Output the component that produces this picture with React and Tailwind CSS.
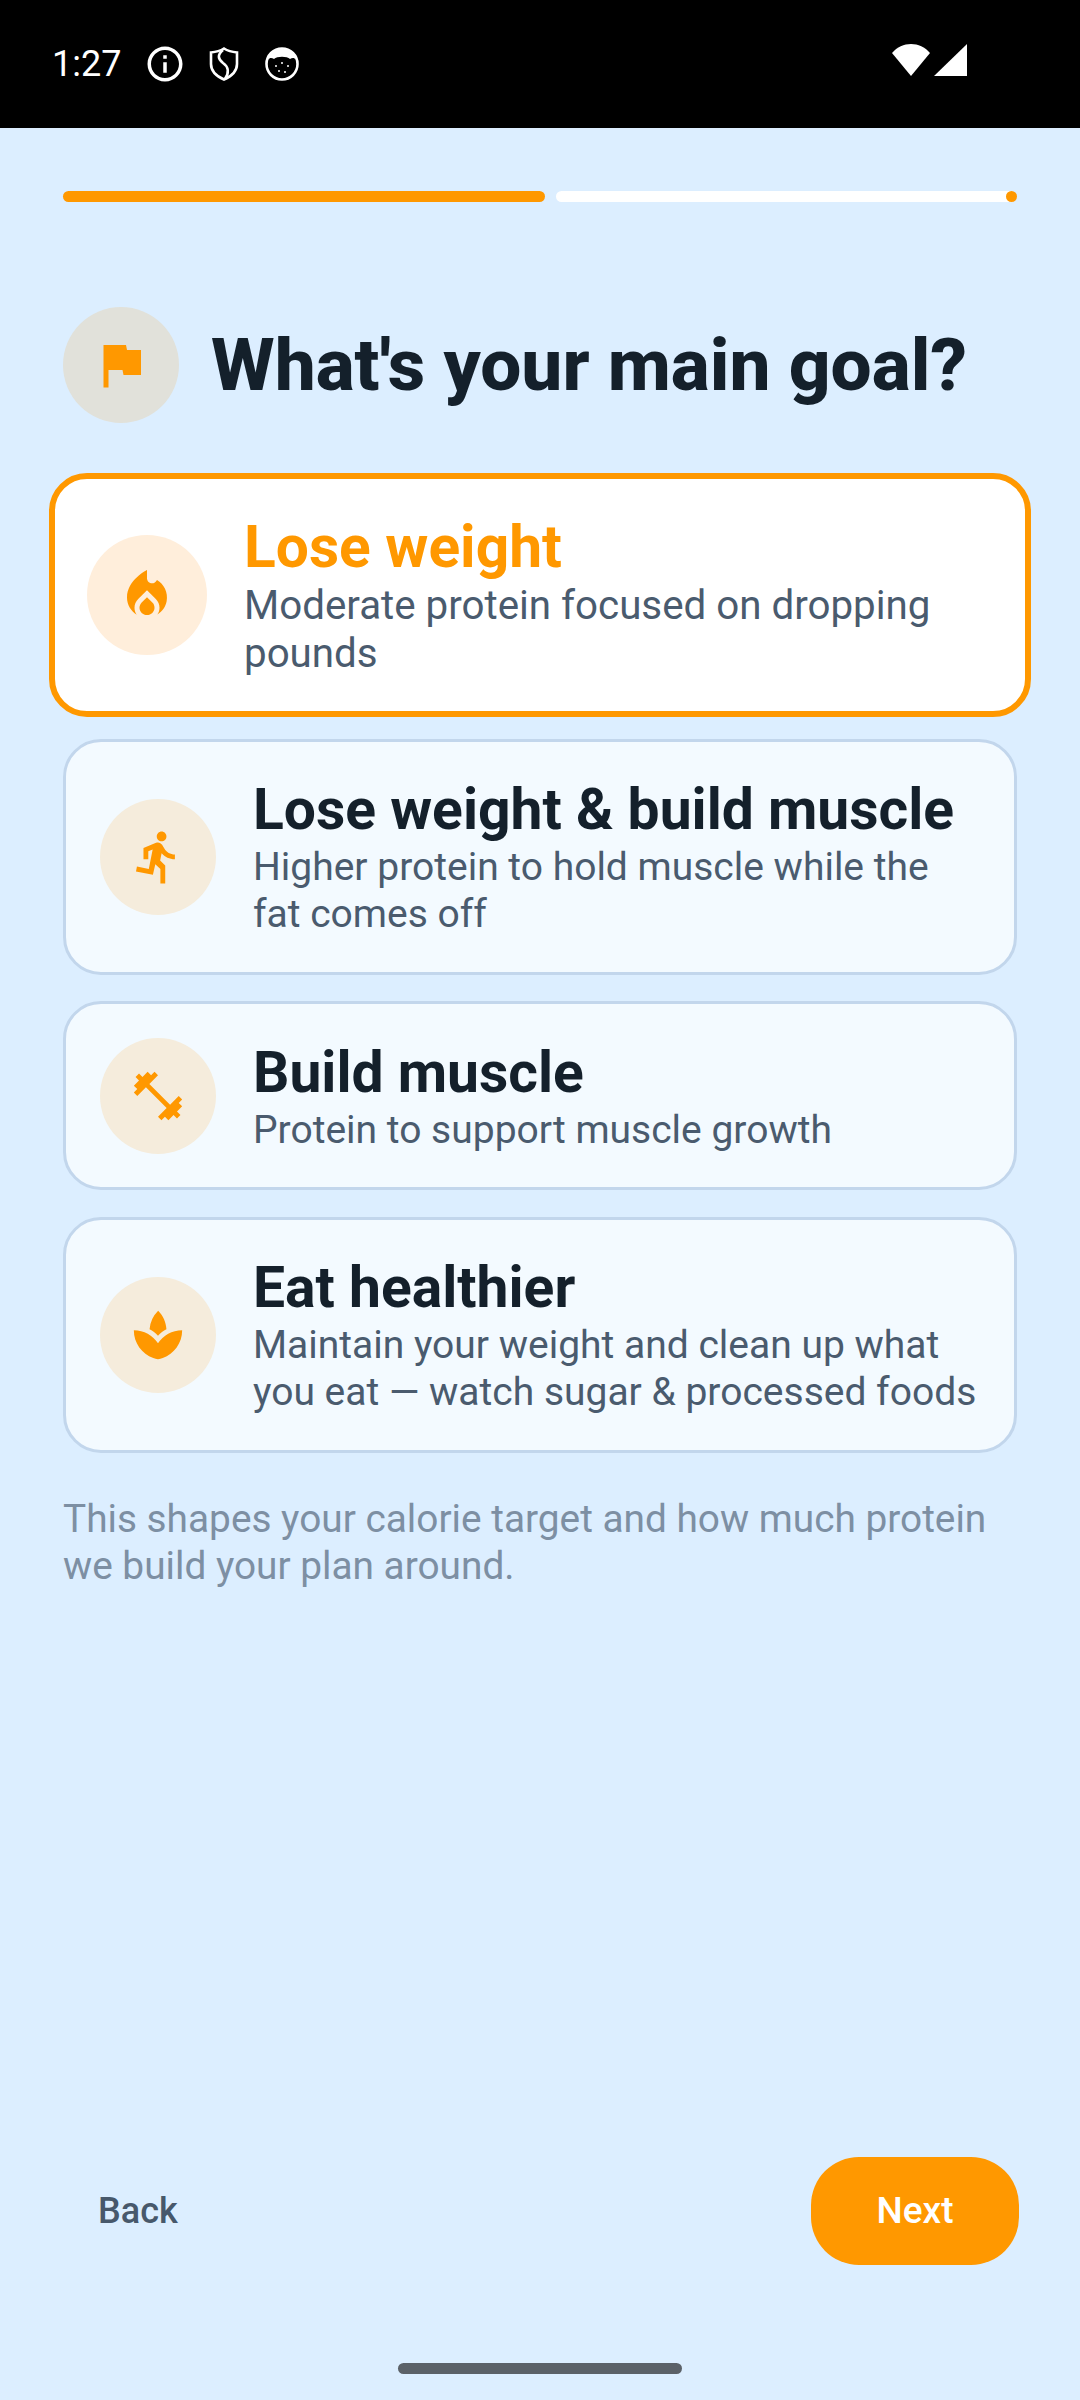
import React from 'react';
import { MdDirectionsRun, MdFitnessCenter, MdFlag, MdInfoOutline, MdLocalFireDepartment, MdSpa } from 'react-icons/md';

const goals = [
  {
    title: 'Lose weight',
    desc: 'Moderate protein focused on dropping pounds',
    Icon: MdLocalFireDepartment,
    active: true,
  },
  {
    title: 'Lose weight & build muscle',
    desc: 'Higher protein to hold muscle while the fat comes off',
    Icon: MdDirectionsRun,
  },
  {
    title: 'Build muscle',
    desc: 'Protein to support muscle growth',
    Icon: MdFitnessCenter,
  },
  {
    title: 'Eat healthier',
    desc: 'Maintain your weight and clean up what you eat — watch sugar & processed foods',
    Icon: MdSpa,
  },
];

const StatusBar = () => (
  <div className="flex h-[128px] shrink-0 items-center bg-black pl-[52px] pr-[113px] text-white">
    <span className="w-[68px] text-[36px] leading-none">1:27</span>
    <MdInfoOutline className="ml-[24px] text-[42px]" />
    {/* shield */}
    <svg viewBox="0 0 30 34" className="ml-[23px] h-[34px] w-[30px]" fill="none" stroke="white" strokeWidth="2.600">
      <path d="M15 1.500 C19 4 23 5 28 5.500 V17 C28 24 22 29.500 15 32.500 C8 29.500 2 24 2 17 V5.500 C7 5 11 4 15 1.500 Z" />
      <path d="M14 3 C8 8 9 12 14 16 C20 20 20 26 16 32" />
    </svg>
    {/* round app icon */}
    <svg viewBox="0 0 34 34" className="ml-[26px] h-[34px] w-[34px]">
      <circle cx="17" cy="17" r="15.500" fill="black" stroke="white" strokeWidth="2.600" />
      <path d="M3 13 C4 5 10 2 17 2 C24 2 30 5 31 13 C29 10 27 11 25 12 C22 9 12 9 9 12 C7 11 5 10 3 13 Z" fill="white" />
      <circle cx="11" cy="19" r="1" fill="white" />
      <circle cx="17" cy="16" r="1" fill="white" />
      <circle cx="23" cy="19" r="1" fill="white" />
      <circle cx="14" cy="24" r="1" fill="white" />
      <circle cx="20" cy="25" r="1" fill="white" />
    </svg>
    <div className="ml-auto mb-[8px] flex items-end">
      <svg viewBox="0 0 38 32" className="h-[32px] w-[38px]" fill="white">
        <path d="M19 32 L0 9 C5 3 12 0 19 0 C26 0 33 3 38 9 Z" />
      </svg>
      <svg viewBox="0 0 33 32" className="ml-[4px] h-[32px] w-[33px]" fill="white">
        <path d="M33 0 V32 H0 Z" />
      </svg>
    </div>
  </div>
);

const ProgressBar = () => (
  <div className="flex gap-[11px]">
    <div className="h-[11px] w-[482px] rounded-full bg-[#ff9800]" />
    <div className="relative h-[11px] w-[460px] rounded-full bg-white">
      <div className="absolute right-[-1px] top-0 h-[11px] w-[11px] rounded-full bg-[#ff9800]" />
    </div>
  </div>
);

const GoalCard = ({ goal }) => {
  const { title, desc, Icon, active } = goal;
  return (
    <div
      className={
        active
          ? 'mx-[-14px] mb-[-5px] flex items-center rounded-[38px] border-[6px] border-[#ff9800] bg-white pl-[32px] pr-[30px] pt-[33px] pb-[34px]'
          : 'flex items-center rounded-[38px] border-[3px] border-[#c2d6ec] bg-[#f3faff] py-[33.500px] pl-[34px] pr-[30px]'
      }
    >
      <div
        className={
          active
            ? 'flex h-[120px] w-[120px] shrink-0 items-center justify-center rounded-full bg-[#ffeedb] text-[#ff9800]'
            : 'flex h-[116px] w-[116px] shrink-0 items-center justify-center rounded-full bg-[#f5ecdc] text-[#ff9800]'
        }
      >
        <Icon className={active ? 'text-[60px]' : 'text-[58px]'} />
      </div>
      {active ? (
        <div className="ml-[37px] min-w-0 flex-1">
          <div className="text-[58.700px] font-bold leading-[70px] text-[#ff9800]">{title}</div>
          <div className="text-[40.300px] leading-[47.500px] text-[#4a5b6e]">{desc}</div>
        </div>
      ) : (
        <div className="ml-[37px] min-w-0 flex-1">
          <div className="text-[57px] font-bold leading-[69px] text-[#14202b]">{title}</div>
          <div className="text-[39px] leading-[47px] text-[#4a5b6e]">{desc}</div>
        </div>
      )}
    </div>
  );
};

export default function App() {
  return (
    <div className="relative flex h-[2400px] w-[1080px] flex-col bg-[#dceeff] font-['Roboto',sans-serif]">
      <StatusBar />
      <div className="flex flex-1 flex-col px-[63px] pt-[63px]">
        <ProgressBar />

        <div className="mt-[105px] flex items-center">
          <div className="flex h-[116px] w-[116px] shrink-0 items-center justify-center rounded-full bg-[#e1e1da] text-[#ff9800]">
            <MdFlag className="text-[60px]" />
          </div>
          <h1 className="ml-[32px] whitespace-nowrap text-[73px] font-extrabold leading-[84px] text-[#14202b]">
            What's your main goal?
          </h1>
        </div>

        <div className="mt-[50px] flex flex-col gap-[26.500px]">
          {goals.map((goal) => (
            <GoalCard key={goal.title} goal={goal} />
          ))}
        </div>

        <p className="mt-[42px] text-[38.800px] leading-[47px] text-[#7d8fa3]">
          This shapes your calorie target and how much protein we build your plan around.
        </p>

        <div className="mt-auto mb-[135px] flex items-center justify-between pl-[35px]">
          <span className="text-[36px] font-medium text-[#47586b]">Back</span>
          <button className="mr-[-2px] flex h-[108px] w-[208px] items-center justify-center rounded-[48px] bg-[#ff9800] text-[37px] font-medium text-white">
            Next
          </button>
        </div>
      </div>
      <div className="absolute left-[398px] top-[2363px] h-[11px] w-[284px] rounded-full bg-[#5b6168]" />
    </div>
  );
}
